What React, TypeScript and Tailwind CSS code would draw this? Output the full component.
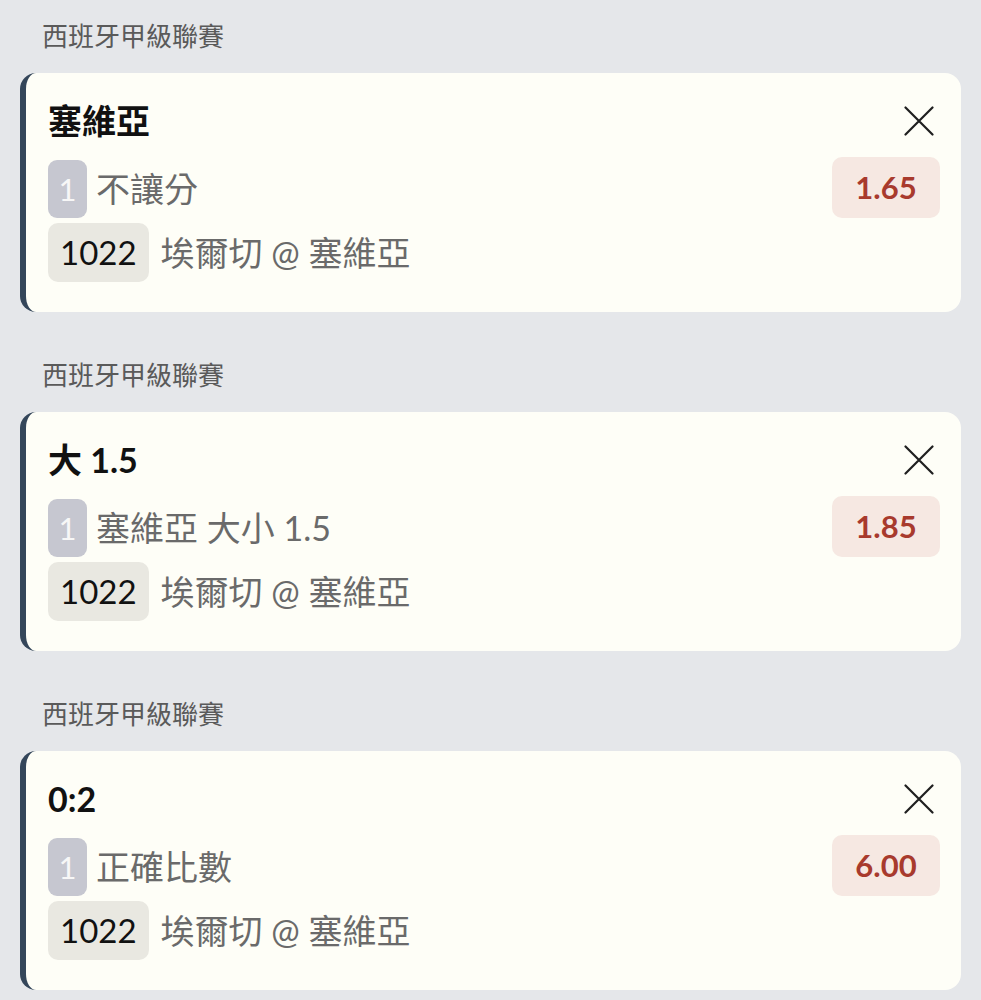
import React from "react";

type Bet = { title: string; market: string; odds: string };

const bets: Bet[] = [
  { title: "塞維亞", market: "不讓分", odds: "1.65" },
  { title: "大 1.5", market: "塞維亞 大小 1.5", odds: "1.85" },
  { title: "0:2", market: "正確比數", odds: "6.00" },
];

const font = { fontFamily: "Lato, 'Noto Sans CJK TC', 'Noto Sans', sans-serif" };

function CloseIcon() {
  return (
    <svg width="30" height="30" viewBox="0 0 30 30" fill="none">
      <path d="M1.5 1.5 L28.5 28.5 M28.5 1.5 L1.5 28.5" stroke="#1f1f1f" strokeWidth="2.2" strokeLinecap="round" />
    </svg>
  );
}

function Card({ bet }: { bet: Bet }) {
  return (
    <div className="flex flex-col">
      <div className="h-[73px] flex items-center pl-[42px] text-[26px] text-[#5a5a5a]">西班牙甲級聯賽</div>
      <div className="mx-[20px] rounded-[16px] border-l-[6px] border-[#34465a] bg-[#fefef7] pt-[24px] pb-[30px] pl-[22px] pr-[21px]">
        <div className="h-[48px] flex items-center justify-between">
          <div className="text-[34px] font-bold text-[#111] leading-none">{bet.title}</div>
          <div className="mr-[6px] flex items-center">
            <CloseIcon />
          </div>
        </div>
        <div className="mt-[12px] flex items-end justify-between">
          <div className="flex items-center">
            <div className="h-[58px] w-[39px] rounded-[9px] bg-[#c6c7d0] flex items-center justify-center text-[31px] text-[#f7f7f7]">1</div>
            <div className="ml-[9px] text-[34px] text-[#6a6a6a] leading-none">{bet.market}</div>
          </div>
          <div className="h-[61px] w-[108px] rounded-[10px] bg-[#f6e8e2] flex items-center justify-center text-[31px] font-bold text-[#a83a2d]">{bet.odds}</div>
        </div>
        <div className="mt-[5px] flex items-center">
          <div className="h-[59px] px-[12px] rounded-[10px] bg-[#e9e8e1] flex items-center text-[33px] text-[#111]">1022</div>
          <div className="ml-[12px] text-[34px] text-[#6a6a6a] leading-none">埃爾切 @ 塞維亞</div>
        </div>
      </div>
      <div className="h-[27px]" />
    </div>
  );
}

export default function App() {
  return (
    <div className="w-[981px] h-[1000px] overflow-hidden bg-[#e5e7ea]" style={font}>
      {bets.map((b, i) => (
        <Card key={i} bet={b} />
      ))}
    </div>
  );
}
